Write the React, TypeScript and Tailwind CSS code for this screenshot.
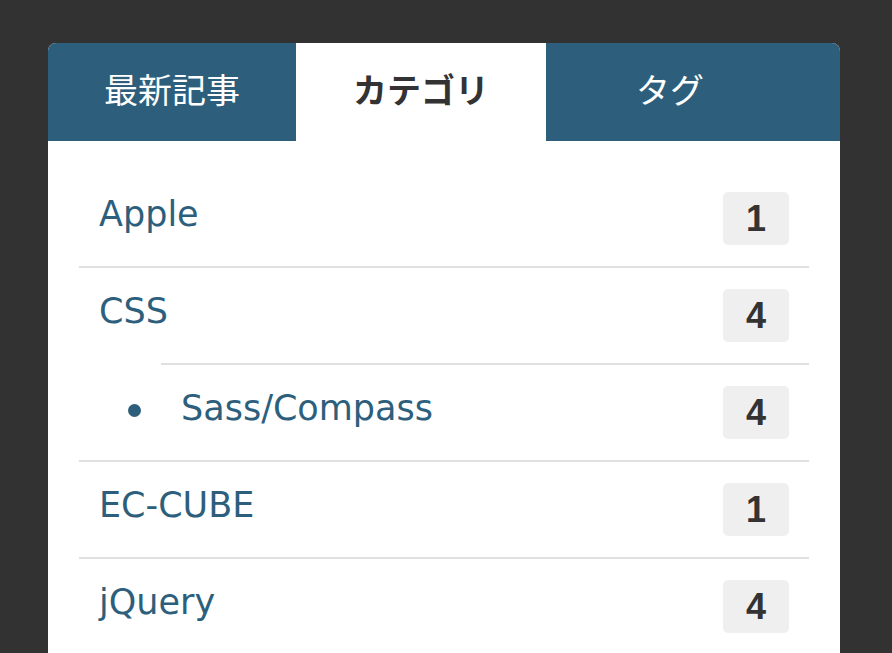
import React from "react";

const rows = [
  { name: "Apple", count: 1 },
  { name: "CSS", count: 4, children: [{ name: "Sass/Compass", count: 4 }] },
  { name: "EC-CUBE", count: 1 },
  { name: "jQuery", count: 4 },
];

function Badge({ n }: { n: number }) {
  return (
    <span className="flex h-[53px] w-[66px] items-center justify-center rounded-[5px] bg-[#efefef] text-[36px] font-bold text-[#333333] [font-family:'Liberation_Sans',Arial,sans-serif]">
      {n}
    </span>
  );
}

export default function App() {
  return (
    <div className="min-h-[653px] h-[653px] overflow-hidden bg-[#323232] pt-[43px] pl-[48px]">
      <div className="w-[792px] overflow-hidden rounded-t-[8px] bg-white">
        <div className="flex h-[98px] bg-[#2d5f7d] text-[34px] [font-family:'Noto_Sans_CJK_JP','Noto_Sans',sans-serif]">
          <div className="flex w-[248px] items-center justify-center pb-[8px] text-white">最新記事</div>
          <div className="flex w-[250px] items-center justify-center bg-white pb-[8px] font-bold text-[#333333]">カテゴリ</div>
          <div className="flex w-[248px] items-center justify-center pb-[8px] text-white">タグ</div>
        </div>
        <ul className="px-[31px] pt-[30px] text-[35px] text-[#2d5f7d] [font-family:'DejaVu_Sans',Verdana,sans-serif]">
          {rows.map((r, i) => (
            <li key={r.name} className={i > 0 ? "border-t-2 border-[#e0e0e0]" : ""}>
              <div className="flex h-[95px] items-center justify-between px-[20px]">
                <span className="-mt-[8px]">{r.name}</span>
                <Badge n={r.count} />
              </div>
              {r.children && (
                <ul className="ml-[82px]">
                  {r.children.map((c) => (
                    <li key={c.name} className="border-t-2 border-[#e0e0e0]">
                      <div className="relative flex h-[95px] items-center justify-between pl-[20px] pr-[20px]">
                        <span className="absolute left-[-33px] top-[39px] h-[13px] w-[13px] rounded-full bg-[#2d5f7d]" />
                        <span className="-mt-[8px]">{c.name}</span>
                        <Badge n={c.count} />
                      </div>
                    </li>
                  ))}
                </ul>
              )}
            </li>
          ))}
        </ul>
      </div>
    </div>
  );
}
